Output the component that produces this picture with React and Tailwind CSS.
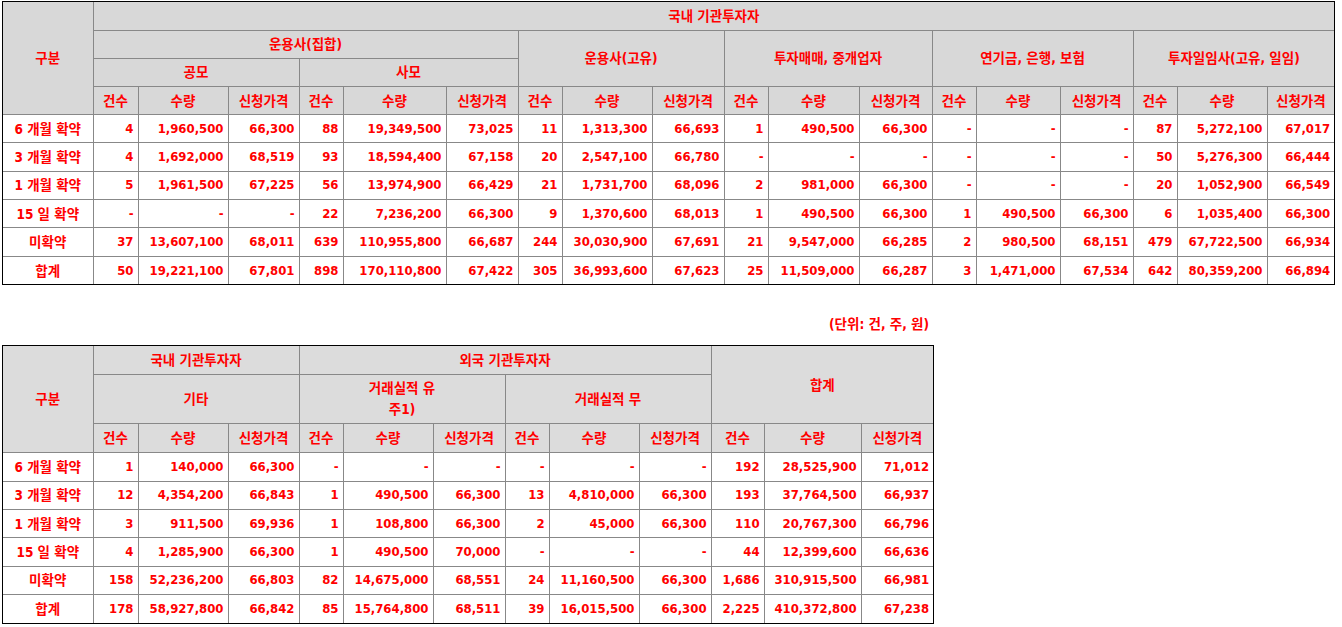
import React from "react";

const FONT = {
  fontFamily: '"DejaVu Sans Condensed", "DejaVu Sans", "Noto Sans CJK KR", sans-serif',
};

const t1Cols = [90, 45, 90, 71, 44, 103, 72, 44, 90, 72, 44, 91, 73, 44, 84, 73, 44, 90, 67];
const t2Cols = [90, 45, 90, 71, 44, 90, 72, 44, 90, 72, 53, 97, 72];

const D = ["-", "-", "-"];

const t1Rows = [
  ["6 개월 확약", ["4", "1,960,500", "66,300"], ["88", "19,349,500", "73,025"], ["11", "1,313,300", "66,693"], ["1", "490,500", "66,300"], D, ["87", "5,272,100", "67,017"]],
  ["3 개월 확약", ["4", "1,692,000", "68,519"], ["93", "18,594,400", "67,158"], ["20", "2,547,100", "66,780"], D, D, ["50", "5,276,300", "66,444"]],
  ["1 개월 확약", ["5", "1,961,500", "67,225"], ["56", "13,974,900", "66,429"], ["21", "1,731,700", "68,096"], ["2", "981,000", "66,300"], D, ["20", "1,052,900", "66,549"]],
  ["15 일 확약", D, ["22", "7,236,200", "66,300"], ["9", "1,370,600", "68,013"], ["1", "490,500", "66,300"], ["1", "490,500", "66,300"], ["6", "1,035,400", "66,300"]],
  ["미확약", ["37", "13,607,100", "68,011"], ["639", "110,955,800", "66,687"], ["244", "30,030,900", "67,691"], ["21", "9,547,000", "66,285"], ["2", "980,500", "68,151"], ["479", "67,722,500", "66,934"]],
  ["합계", ["50", "19,221,100", "67,801"], ["898", "170,110,800", "67,422"], ["305", "36,993,600", "67,623"], ["25", "11,509,000", "66,287"], ["3", "1,471,000", "67,534"], ["642", "80,359,200", "66,894"]],
];

const t2Rows = [
  ["6 개월 확약", ["1", "140,000", "66,300"], D, D, ["192", "28,525,900", "71,012"]],
  ["3 개월 확약", ["12", "4,354,200", "66,843"], ["1", "490,500", "66,300"], ["13", "4,810,000", "66,300"], ["193", "37,764,500", "66,937"]],
  ["1 개월 확약", ["3", "911,500", "69,936"], ["1", "108,800", "66,300"], ["2", "45,000", "66,300"], ["110", "20,767,300", "66,796"]],
  ["15 일 확약", ["4", "1,285,900", "66,300"], ["1", "490,500", "70,000"], D, ["44", "12,399,600", "66,636"]],
  ["미확약", ["158", "52,236,200", "66,803"], ["82", "14,675,000", "68,551"], ["24", "11,160,500", "66,300"], ["1,686", "310,915,500", "66,981"]],
  ["합계", ["178", "58,927,800", "66,842"], ["85", "15,764,800", "68,511"], ["39", "16,015,500", "66,300"], ["2,225", "410,372,800", "67,238"]],
];

const cell = "border border-[#888888] p-0 align-middle";

function Th({ children, className = "", ...rest }) {
  return (
    <th className={`${cell} text-center font-bold text-[13.5px] ${className}`} {...rest}>
      {children}
    </th>
  );
}

function SubHeads() {
  return (
    <>
      <Th>건수</Th>
      <Th>수량</Th>
      <Th>신청가격</Th>
    </>
  );
}

function DataRow({ row }) {
  const [label, ...groups] = row;
  return (
    <tr className="h-[28.3px] bg-white">
      <td className={`${cell} text-center text-[13.5px]`}>{label}</td>
      {groups.flat().map((v, i) => (
        <td key={i} className={`${cell} text-right pr-[4px]`}>
          {v}
        </td>
      ))}
    </tr>
  );
}

export default function App() {
  return (
    <div
      className="bg-white text-[#ff0000] text-[13px] font-bold leading-[16px] pl-[2px] pt-[1px] w-[1342px] h-[627px] overflow-hidden"
      style={FONT}
    >
      <div className="w-[1333px] border border-black">
        <table className="border-collapse table-fixed w-full border-hidden">
          <colgroup>
            {t1Cols.map((w, i) => (
              <col key={i} style={{ width: w }} />
            ))}
          </colgroup>
          <thead className="bg-[#d8d8d8]">
            <tr className="h-[28px]">
              <Th rowSpan={4}>구분</Th>
              <Th colSpan={18}>국내 기관투자자</Th>
            </tr>
            <tr className="h-[28px]">
              <Th colSpan={6}>운용사(집합)</Th>
              <Th colSpan={3} rowSpan={2}>운용사(고유)</Th>
              <Th colSpan={3} rowSpan={2}>투자매매, 중개업자</Th>
              <Th colSpan={3} rowSpan={2}>연기금, 은행, 보험</Th>
              <Th colSpan={3} rowSpan={2}>투자일임사(고유, 일임)</Th>
            </tr>
            <tr className="h-[28.7px]">
              <Th colSpan={3}>공모</Th>
              <Th colSpan={3}>사모</Th>
            </tr>
            <tr className="h-[28px]">
              <SubHeads />
              <SubHeads />
              <SubHeads />
              <SubHeads />
              <SubHeads />
              <SubHeads />
            </tr>
          </thead>
          <tbody>
            {t1Rows.map((r, i) => (
              <DataRow key={i} row={r} />
            ))}
          </tbody>
        </table>
      </div>

      <div className="w-[931px] h-[60px] flex items-center justify-end pr-[4px] pt-[18px] text-[13.5px]">
        (단위: 건, 주, 원)
      </div>

      <div className="w-[932px] border border-black">
        <table className="border-collapse table-fixed w-full border-hidden">
          <colgroup>
            {t2Cols.map((w, i) => (
              <col key={i} style={{ width: w }} />
            ))}
          </colgroup>
          <thead className="bg-[#dcdcdc]">
            <tr className="h-[28.5px]">
              <Th rowSpan={3}>구분</Th>
              <Th colSpan={3}>국내 기관투자자</Th>
              <Th colSpan={6}>외국 기관투자자</Th>
              <Th colSpan={3} rowSpan={2}>합계</Th>
            </tr>
            <tr className="h-[49px]">
              <Th colSpan={3}>기타</Th>
              <Th colSpan={3} className="leading-[21px]">
                거래실적 유
                <br />
                주1)
              </Th>
              <Th colSpan={3}>거래실적 무</Th>
            </tr>
            <tr className="h-[29px]">
              <SubHeads />
              <SubHeads />
              <SubHeads />
              <SubHeads />
            </tr>
          </thead>
          <tbody>
            {t2Rows.map((r, i) => (
              <DataRow key={i} row={r} />
            ))}
          </tbody>
        </table>
      </div>
    </div>
  );
}
